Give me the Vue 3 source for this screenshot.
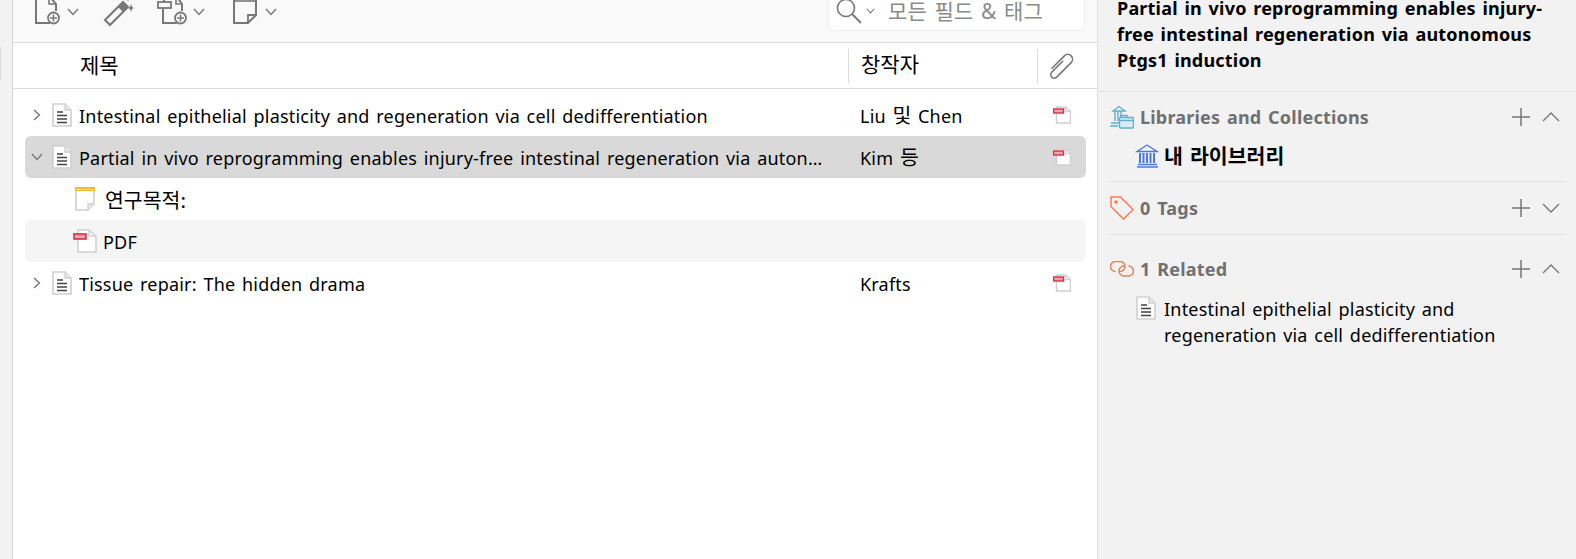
<script setup>
const rows = [
  { title: 'Intestinal epithelial plasticity and regeneration via cell dedifferentiation', creator: ['Liu ', '및', ' Chen'], open: false },
  { title: 'Partial in vivo reprogramming enables injury-free intestinal regeneration via autonomous Ptgs1 induction', creator: ['Kim ', '등', ''], open: true, selected: true },
]
</script>

<template>
  <div class="page">
    <svg class="defs">
      <symbol id="doc" viewBox="0 0 20 24">
        <path d="M1 1h12l6 6v16H1z" fill="#fff" stroke="#cfcfcf" stroke-width="1.6" />
        <path d="M13 1v6h6" fill="#e8e8e8" stroke="#cfcfcf" stroke-width="1.4" />
        <path d="M5 9h6M5 12.5h10M5 16h10M5 19.5h10" stroke="#444" stroke-width="1.4" fill="none" />
      </symbol>
      <symbol id="pdf" viewBox="0 0 24 24">
        <path d="M5 1h11l7 6v16H5z" fill="#fff" stroke="#cfcfcf" stroke-width="1.5" />
        <path d="M16 1v6h7" fill="none" stroke="#cfcfcf" stroke-width="1.4" />
        <rect x="1" y="5" width="12" height="5" fill="#f0a3ad" stroke="#d92e45" stroke-width="1.6" />
      </symbol>
      <symbol id="attach" viewBox="0 0 18 18">
        <path d="M3.5 1h9l5 4.5V17h-14z" fill="#fff" stroke="#cfcfcf" stroke-width="1.4" />
        <path d="M12.5 1v4.5h5" fill="none" stroke="#cfcfcf" stroke-width="1.2" />
        <rect x="0.5" y="3" width="10" height="4" fill="#f0a3ad" stroke="#d92e45" stroke-width="1.4" />
      </symbol>
      <symbol id="down" viewBox="0 0 12 8"><path d="M1 1l5 5.5L11 1" fill="none" stroke="#777" stroke-width="1.4" /></symbol>
      <symbol id="big-down" viewBox="0 0 18 10"><path d="M1 1l8 8 8-8" fill="none" stroke="#777" stroke-width="1.4" /></symbol>
      <symbol id="big-up" viewBox="0 0 18 10"><path d="M1 9l8-8 8 8" fill="none" stroke="#777" stroke-width="1.4" /></symbol>
      <symbol id="plus" viewBox="0 0 18 18"><path d="M9 0v18M0 9h18" fill="none" stroke="#777" stroke-width="1.5" /></symbol>
    </svg>

    <div class="strip"><div class="tab"></div></div>

    <main class="middle">
      <div class="toolbar">
        <div class="tools">
          <svg class="ico" width="25" height="26" viewBox="0 0 25 26">
            <path d="M1 -2v26h14M15 -2l6 7v7" fill="none" stroke="#777" stroke-width="2" />
            <path d="M14 -2v7h7" fill="none" stroke="#777" stroke-width="1.6" />
            <circle cx="18.5" cy="19" r="5.5" fill="#f9f9f9" stroke="#777" stroke-width="1.8" />
            <path d="M18.5 15.5v7M15 19h7" stroke="#777" stroke-width="1.5" />
          </svg>
          <svg class="chev" width="12" height="8"><use href="#down" /></svg>
          <svg class="ico wand" width="30" height="26" viewBox="0 0 30 26">
            <path d="M1 21L19 3l5 5L6 26z" fill="none" stroke="#777" stroke-width="2" />
            <path d="M14 8l5-5 5 5-5 5z" fill="#777" />
            <path d="M27 5l1 3 2 1-2 1-1 3-1-3-2-1 2-1zM24 -3l1 2 1 1-2 2-2-2z" fill="#777" />
          </svg>
          <svg class="ico plain" width="31" height="26" viewBox="0 0 31 26">
            <path d="M6 10v14h14M20 -2l5 7v7" fill="none" stroke="#777" stroke-width="2" />
            <path d="M19 -2v7h6" fill="none" stroke="#777" stroke-width="1.6" />
            <rect x="1" y="3" width="13" height="6" fill="#f9f9f9" stroke="#777" stroke-width="1.8" />
            <path d="M7 -2v5" stroke="#777" stroke-width="2" />
            <circle cx="23.5" cy="19" r="5.5" fill="#f9f9f9" stroke="#777" stroke-width="1.8" />
            <path d="M23.5 15.5v7M20 19h7" stroke="#777" stroke-width="1.5" />
          </svg>
          <svg class="chev" width="12" height="8"><use href="#down" /></svg>
          <svg class="ico note" width="24" height="25" viewBox="0 0 24 25">
            <path d="M1 -2v26h14l8-8V-2" fill="none" stroke="#777" stroke-width="2" />
            <path d="M1 2h22" stroke="#777" stroke-width="1.6" />
            <path d="M15 24v-8h8" fill="none" stroke="#777" stroke-width="1.8" />
          </svg>
          <svg class="chev" width="12" height="8"><use href="#down" /></svg>
        </div>
        <div class="search">
          <svg width="26" height="24" viewBox="0 0 26 24">
            <circle cx="10" cy="8" r="8.5" fill="none" stroke="#777" stroke-width="1.6" />
            <path d="M16 14l9 9" stroke="#777" stroke-width="1.8" />
          </svg>
          <svg class="mini" width="9" height="6"><use href="#down" /></svg>
          <span>모든 필드 &amp; 태그</span>
        </div>
      </div>

      <div class="head">
        <div class="head-title">제목</div>
        <div class="head-creator">창작자</div>
        <div class="head-clip">
          <svg width="24" height="23" viewBox="0 0 24 23">
            <path transform="rotate(45 12 11) translate(12 11) scale(.87) translate(-12 -11)" d="M9.5 5V23.500a4 4 0 0 0 8 0V0a5.500 5.500 0 0 0-11 0V21" fill="none" stroke="#7a7a7a" stroke-width="1.9" />
          </svg>
        </div>
      </div>

      <div class="list">
        <template v-for="row in rows" :key="row.title">
          <div class="row" :class="{ selected: row.selected }">
            <svg class="twisty" :class="{ open: row.open }" width="12" height="8"><use href="#down" /></svg>
            <svg class="doc" width="20" height="24"><use href="#doc" /></svg>
            <div class="title">{{ row.title }}</div>
            <div class="creator">{{ row.creator[0] }}<span class="ko">{{ row.creator[1] }}</span>{{ row.creator[2] }}</div>
            <svg width="18" height="18"><use href="#attach" /></svg>
          </div>
          <template v-if="row.open">
            <div class="row child">
              <svg class="note-ico" width="20" height="24" viewBox="0 0 20 24">
                <path d="M1 2v21h12l6-6V2z" fill="#fff" stroke="#cfcfcf" stroke-width="1.6" />
                <path d="M13 23v-6h6" fill="#e8e8e8" stroke="#cfcfcf" stroke-width="1.4" />
                <rect x="0" y="0" width="20" height="4" fill="#f6b632" />
                <path d="M1 2.500h18" stroke="#fde29b" stroke-width="1" />
              </svg>
              <div class="ko child-text">연구목적:</div>
            </div>
            <div class="row child pdf-row">
              <svg class="pdf-ico" width="24" height="24"><use href="#pdf" /></svg>
              <div class="child-text">PDF</div>
            </div>
          </template>
        </template>
        <div class="row">
          <svg class="twisty" width="12" height="8"><use href="#down" /></svg>
          <svg class="doc" width="20" height="24"><use href="#doc" /></svg>
          <div class="title">Tissue repair: The hidden drama</div>
          <div class="creator">Krafts</div>
          <svg width="18" height="18"><use href="#attach" /></svg>
        </div>
      </div>
    </main>

    <aside class="side">
      <h1 class="side-title">Partial in vivo reprogramming enables injury-free intestinal regeneration via autonomous Ptgs1 induction</h1>

      <section class="sec first">
        <div class="sec-head">
          <svg class="sec-ico" width="24" height="24" viewBox="0 0 24 24">
            <g fill="none" stroke="#5fb0cf" stroke-width="1.4">
              <path d="M3 6L9 1.500 15 6zM5 6v10M8 6v10M11 6v10M1 18h10M0 21h8" />
              <rect x="9.500" y="12.500" width="14" height="10.500" rx="1" fill="#d9edf5" />
              <path d="M9.500 15.500h14M11 12.500v-2h6v2" />
            </g>
          </svg>
          <span class="sec-label">Libraries and Collections</span>
          <svg class="plus" width="18" height="18"><use href="#plus" /></svg>
          <svg width="18" height="10"><use href="#big-up" /></svg>
        </div>
        <div class="lib">
          <svg width="24" height="24" viewBox="0 0 24 24">
            <g fill="none" stroke="#4c77e6" stroke-width="1.4">
              <path d="M2 7.500L12 1l10 6.500zM2 23h21M3 20.500h19" />
              <path d="M5 9v10M8.500 9v10M12 9v10M15.500 9v10M19 9v10" stroke-width="2" />
            </g>
          </svg>
          <span class="ko">내 라이브러리</span>
        </div>
      </section>

      <section class="sec tags">
        <div class="sec-head">
          <svg class="sec-ico" width="24" height="24" viewBox="0 0 24 24">
            <path d="M1 1h9.500L23 13.500 13.500 23 1 10.500z" fill="none" stroke="#ff7a50" stroke-width="1.5" />
            <circle cx="6" cy="6" r="1.800" fill="#ff7a50" />
          </svg>
          <span class="sec-label">0 Tags</span>
          <svg class="plus" width="18" height="18"><use href="#plus" /></svg>
          <svg width="18" height="10"><use href="#big-down" /></svg>
        </div>
      </section>

      <section class="sec related">
        <div class="sec-head">
          <svg class="sec-ico" width="24" height="16" viewBox="0 0 24 16">
            <g fill="none" stroke="#de8558" stroke-width="1.5">
              <path d="M5.500 10.500a5 5 0 0 1 0-10H10a5 5 0 0 1 0 10H9" />
              <path d="M18.500 5a5 5 0 0 1 0 10H14a5 5 0 0 1 0-10h1" />
            </g>
          </svg>
          <span class="sec-label">1 Related</span>
          <svg class="plus" width="18" height="18"><use href="#plus" /></svg>
          <svg width="18" height="10"><use href="#big-up" /></svg>
        </div>
        <div class="rel-item">
          <svg width="20" height="24"><use href="#doc" /></svg>
          <div>Intestinal epithelial plasticity and regeneration via cell dedifferentiation</div>
        </div>
      </section>
    </aside>
  </div>
</template>

<style>
html, body { margin: 0; background: #fff; overflow: hidden; }
</style>

<style scoped>
.page {
  display: flex;
  width: 1576px;
  height: 559px;
  overflow: hidden;
  font-family: "Noto Sans", "Noto Sans CJK KR", sans-serif;
  font-size: 18px;
  letter-spacing: 0.2px;
  word-spacing: 1.8px;
  color: #000;
}
.defs { display: none; }
.ko { font-size: 20.5px; letter-spacing: 0; line-height: 1; }

.strip {
  width: 12px;
  flex: none;
  background: #f2f2f2;
  border-right: 1px solid #d4d4d4;
  padding-top: 47px;
  box-sizing: content-box;
}
.tab { width: 1px; height: 33px; background: #d8d8d8; }

.middle {
  width: 1084px;
  flex: none;
  border-right: 1px solid #e0e0e0;
  background: #fff;
}
.toolbar {
  height: 42px;
  background: #f9f9f9;
  border-bottom: 1px solid #d9d9d9;
  display: flex;
  justify-content: space-between;
  overflow: hidden;
}
.tools { display: flex; align-items: flex-start; padding-left: 22px; }
.ico { display: block; margin-top: -1px; flex: none; overflow: visible; }
.chev { margin: 8px 0 0 7px; flex: none; }
.wand { margin-left: 25px; }
.plain { margin-left: 23px; }
.note { margin-left: 28px; }
.note + .chev { margin-left: 8px; }
.plain + .chev { margin-left: 5px; }

.search {
  width: 257px;
  height: 31px;
  margin-right: 12px;
  background: #fff;
  border: 1px solid #efefef;
  border-top: none;
  border-radius: 0 0 6px 6px;
  display: flex;
  align-items: flex-start;
  padding-left: 7px;
  color: #8a8a8a;
  box-sizing: border-box;
  line-height: 22px;
}
.search svg { flex: none; overflow: visible; }
.search .mini { margin: 8px 0 0 4px; }
.search span { margin-left: 13px; white-space: nowrap; font-size: 21px; letter-spacing: 0.2px; }

.head {
  height: 45px;
  border-bottom: 1px solid #dcdcdc;
  display: flex;
  align-items: center;
  font-size: 21px;
  letter-spacing: 0;
}
.head-title { width: 835px; padding-left: 67px; box-sizing: border-box; margin-top: -4px; }
.head-creator {
  width: 189px;
  height: 34px;
  line-height: 30px;
  padding-left: 12px;
  box-sizing: border-box;
  border-left: 1px solid #dcdcdc;
}
.head-clip {
  height: 34px;
  padding-left: 11px;
  border-left: 1px solid #dcdcdc;
  display: flex;
  align-items: center;
}
.head-clip svg { overflow: visible; margin-top: 2px; }

.list { padding: 5px 11px 0 12px; }
.row {
  height: 42px;
  display: flex;
  align-items: center;
  border-radius: 6px;
  box-sizing: border-box;
}
.row.selected { background: #d9d9d9; }
.row.child { padding-left: 50px; }
.pdf-row { background: #f5f5f5; }
.twisty { margin-left: 6px; margin-right: 9px; transform: rotate(-90deg); flex: none; }
.twisty.open { transform: none; }
.doc { margin-right: 7px; flex: none; }
.title {
  width: 752px;
  flex: none;
  white-space: nowrap;
  overflow: hidden;
  text-overflow: ellipsis;
  margin-right: 29px;
  padding-top: 2px;
}
.creator { width: 193px; flex: none; padding-top: 2px; }
.child-text { padding-top: 2px; }
.note-ico { margin-right: 10px; }
.pdf-ico { margin-left: -2px; margin-right: 6px; }

.side {
  flex: 1;
  background: #f2f2f2;
  min-width: 0;
}
.side-title {
  margin: -5px 0 0;
  padding: 0 30px 18px 19px;
  font-size: 18px;
  font-weight: 700;
  line-height: 26px;
  border-bottom: 1px solid #e2e2e2;
}
.sec { margin: 0 10px 0 12px; border-bottom: 1px solid #e2e2e2; }
.sec.first { padding-top: 13px; padding-bottom: 13px; }
.sec.tags { padding: 14px 0 14px; }
.sec.related { border-bottom: none; padding-top: 22px; }
.sec-head {
  display: flex;
  align-items: center;
  height: 24px;
  padding-right: 6px;
}
.sec-ico { flex: none; margin-right: 6px; }
.sec-label { flex: 1; font-weight: 700; color: #707070; }
.plus { margin-right: 12px; }
.lib {
  display: flex;
  align-items: center;
  margin: 15px 0 0 25px;
  font-weight: 700;
  gap: 5px;
}
.rel-item {
  display: flex;
  gap: 8px;
  margin: 15px 40px 0 26px;
  line-height: 26px;
}
.rel-item svg { flex: none; }
</style>
